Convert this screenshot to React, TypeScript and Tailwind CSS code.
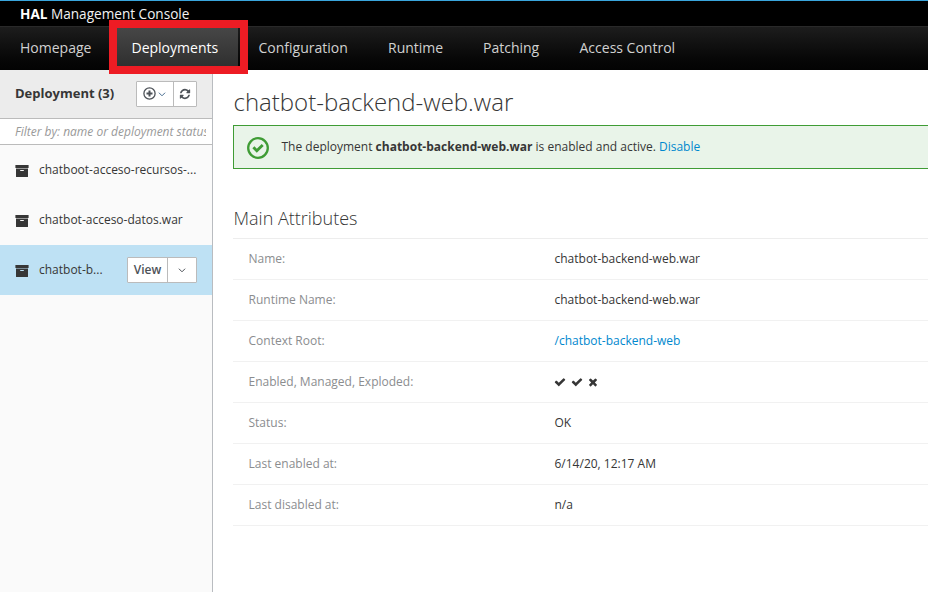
import React from 'react';

const CHECK =
  'M1671 566q0 40-28 68l-724 724-136 136q-28 28-68 28t-68-28l-136-136-362-362q-28-28-28-68t28-68l136-136q28-28 68-28t68 28l294 295 656-657q28-28 68-28t68 28l136 136q28 28 28 68z';
const TIMES =
  'M1490 1322q0 40-28 68l-136 136q-28 28-68 28t-68-28l-294-294-294 294q-28 28-68 28t-68-28l-136-136q-28-28-28-68t28-68l294-294-294-294q-28-28-28-68t28-68l136-136q28-28 68-28t68 28l294 294 294-294q28-28 68-28t68 28l136 136q28 28 28 68t-28 68l-294 294 294 294q28 28 28 68z';
const REFRESH =
  'M1639 1056q0 5-1 7-64 268-268 434.5t-478 166.5q-146 0-282.5-55t-243.5-157l-129 129q-19 19-45 19t-45-19-19-45v-448q0-26 19-45t45-19h448q26 0 45 19t19 45-19 45l-137 137q71 66 161 102t187 36q134 0 250-65t186-179q11-17 53-117 8-23 30-23h192q13 0 22.5 9.5t9.5 22.5zm25-800v448q0 26-19 45t-45 19h-448q-26 0-45-19t-19-45 19-45l138-138q-148-137-349-137-134 0-250 65t-186 179q-11 17-53 117-8 23-30 23h-199q-13 0-22.5-9.5t-9.5-22.5v-7q65-268 270-434.5t480-166.5q146 0 284 55.5t245 156.5l130-129q19-19 45-19t45 19 19 45z';

function Glyph({ d, className }: { d: string; className: string }) {
  return (
    <svg viewBox="0 0 1792 1792" fill="currentColor" className={className}>
      <path d={d} />
    </svg>
  );
}

function AddIcon() {
  return (
    <svg viewBox="0 0 13 13" className="mb-px h-[13px] w-[13px] shrink-0" fill="none" stroke="currentColor">
      <circle cx="6.5" cy="6.5" r="5.6" strokeWidth="1.3" />
      <path d="M6.5 3.5v6M3.5 6.5h6" strokeWidth="2" />
    </svg>
  );
}

function Chevron({ className }: { className: string }) {
  return (
    <svg viewBox="0 0 8 5" className={className} fill="none" stroke="currentColor">
      <path d="M0.9 0.7L4 3.8L7.1 0.7" strokeWidth="1" />
    </svg>
  );
}

function ArchiveIcon() {
  return (
    <svg viewBox="0 0 14 12" className="mt-0.5 h-3 w-3.5 shrink-0" fill="#363636">
      <path d="M0.4 0h13.2v3H0.4z" />
      <path fillRule="evenodd" d="M1 3.4h12v8.1a.5.5 0 0 1-.5.5h-11a.5.5 0 0 1-.5-.5zM5.2 5v1h3.6V5z" />
    </svg>
  );
}

function OkIcon() {
  return (
    <svg viewBox="0 0 22 22" className="mt-px h-[22px] w-[22px]" fill="none" stroke="#3f9c35">
      <circle cx="11" cy="11" r="9.8" strokeWidth="2.3" />
      <path d="M6.4 10.3l3.4 3.4L15.7 8" strokeWidth="2.9" />
    </svg>
  );
}

const nav = [
  { label: 'Homepage', cell: 'w-[111px] pl-5' },
  { label: 'Deployments', cell: 'w-[127px] pl-[20.5px] text-white bg-gradient-to-b from-[#474747] to-[#2d2d2d]' },
  { label: 'Configuration', cell: 'w-[130px] pl-[20.5px]' },
  { label: 'Runtime', cell: 'w-[95px] pl-5' },
  { label: 'Patching', cell: 'w-24 pl-5' },
  { label: 'Access Control', cell: 'w-[140px] pl-[20.5px]' },
];

const rows: { label: string; value: React.ReactNode }[] = [
  { label: 'Name:', value: 'chatbot-backend-web.war' },
  { label: 'Runtime Name:', value: 'chatbot-backend-web.war' },
  { label: 'Context Root:', value: <a className="text-[#0088ce]">/chatbot-backend-web</a> },
  {
    label: 'Enabled, Managed, Exploded:',
    value: (
      <span className="-ml-[0.6px] flex items-center gap-[5px]">
        <Glyph d={CHECK} className="h-3 w-3" />
        <Glyph d={CHECK} className="h-3 w-3" />
        <Glyph d={TIMES} className="-ml-px h-3 w-3" />
      </span>
    ),
  },
  { label: 'Status:', value: 'OK' },
  { label: 'Last enabled at:', value: '6/14/20, 12:17 AM' },
  { label: 'Last disabled at:', value: 'n/a' },
];

export default function App() {
  return (
    <div className="relative flex h-[592px] w-[928px] flex-col overflow-hidden bg-white font-['Open_Sans',sans-serif] text-[12px] leading-5 text-[#363636]">
      <header className="h-[70px] shrink-0 border-t border-[#39a5dc] bg-black">
        <div className="h-[25px] pl-5 text-[13.6px] leading-[25px] text-[#f2f2f2]">
          <b className="font-bold text-white">HAL</b> Management Console
        </div>
        <nav className="flex h-11 border-t border-[#292929] bg-gradient-to-b from-[#1d1d1d] to-[#030303] text-[14px] leading-[41px] text-[#d1d1d1]">
          {nav.map((n) => (
            <div key={n.label} className={`shrink-0 whitespace-nowrap ${n.cell}`}>
              {n.label}
            </div>
          ))}
        </nav>
      </header>

      <div className="flex min-h-0 flex-1">
        <aside className="flex w-[213px] shrink-0 flex-col border-r border-[#b9bcc0] bg-[#fafafa]">
          <div className="flex h-[49px] items-center border-b border-[#bbb] bg-[#ececec] pr-[15px] pl-[15px]">
            <h2 className="pb-0.5 text-[13px] font-bold">Deployment (3)</h2>
            <div className="ml-auto flex h-[26px] w-[61px] rounded-[1px] border border-[#bbb] bg-white text-[#4d5258]">
              <div className="flex w-[37px] items-center border-r border-[#bbb] pl-[6px]">
                <AddIcon />
                <Chevron className="ml-0.5 h-[5px] w-2 text-[#4a6e91]" />
              </div>
              <div className="flex flex-1 items-center justify-center">
                <Glyph d={REFRESH} className="h-3 w-3" />
              </div>
            </div>
          </div>
          <div className="h-[26px] border-b border-[#bbb] bg-white pr-[6px] pl-[15px]">
            <div className="overflow-hidden leading-[25px] whitespace-nowrap text-[#999] italic">
              Filter by: name or deployment status
            </div>
          </div>
          <div className="flex h-[50px] items-center gap-[10px] pl-[15px]">
            <ArchiveIcon />
            <span>chatboot-acceso-recursos-...</span>
          </div>
          <div className="flex h-[50px] items-center gap-[10px] pl-[15px]">
            <ArchiveIcon />
            <span>chatbot-acceso-datos.war</span>
          </div>
          <div className="flex h-[50px] items-center gap-[10px] bg-[#bee1f4] pr-[15px] pl-[15px]">
            <ArchiveIcon />
            <span>chatbot-b...</span>
            <div className="ml-auto flex h-[26px] w-[70px] rounded-[1px] border border-[#bbb] bg-white font-semibold text-[#4d5258]">
              <div className="flex w-10 items-center justify-center border-r border-[#bbb]">View</div>
              <div className="flex flex-1 items-center justify-center">
                <Chevron className="h-[5px] w-2" />
              </div>
            </div>
          </div>
        </aside>

        <main className="min-w-0 flex-1 pl-5">
          <h1 className="h-[55px] pt-[17px] pl-[0.5px] text-[24px] leading-[30px] font-light">chatbot-backend-web.war</h1>
          <div className="flex h-11 items-center border border-r-0 border-[#3f9c35] bg-[#e9f4e9] pl-[13px]">
            <OkIcon />
            <p className="pl-[12.5px]">
              The deployment <b className="font-bold">chatbot-backend-web.war</b> is enabled and active.{' '}
              <a className="text-[#0088ce]">Disable</a>
            </p>
          </div>
          <h2 className="h-[69px] pt-[39px] pl-[0.5px] text-[18px] leading-[20px] font-light">Main Attributes</h2>
          <dl className="border-t border-[#ededed]">
            {rows.map((r) => (
              <div key={r.label} className="flex h-[41px] items-center border-b border-[#f1f1f1] pl-[15.5px]">
                <dt className="w-[306px] shrink-0 text-[#8b8d8f]">{r.label}</dt>
                <dd>{r.value}</dd>
              </div>
            ))}
          </dl>
        </main>
      </div>

      <div className="absolute top-5 left-[109px] h-[54px] w-[139px] border-8 border-[#ed1c24]" />
    </div>
  );
}
